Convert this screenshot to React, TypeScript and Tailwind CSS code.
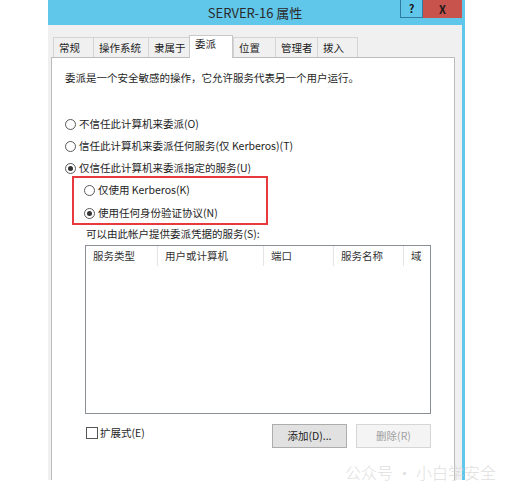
import React from "react";

const font = { fontFamily: '"Noto Sans CJK SC", "Noto Sans", sans-serif' };

const tabs = [
  { label: "常规", w: "w-[40px]" },
  { label: "操作系统", w: "w-[55px]" },
  { label: "隶属于", w: "w-[41px]" },
  { label: "委派", w: "w-[44px]", active: true },
  { label: "位置", w: "w-[42px]" },
  { label: "管理者", w: "w-[42px]" },
  { label: "拨入", w: "w-[41px]" },
];

const columns = [
  { label: "服务类型", w: "w-[72px]" },
  { label: "用户或计算机", w: "w-[106px]" },
  { label: "端口", w: "w-[70px]" },
  { label: "服务名称", w: "w-[70px]" },
  { label: "域", w: "flex-1" },
];

function Radio({ checked, label }: { checked?: boolean; label: string }) {
  return (
    <div className="flex items-center h-[16px]">
      <span className="w-[11px] h-[11px] rounded-full border border-[#5a5a5a] bg-white flex items-center justify-center">
        {checked && <span className="w-[5px] h-[5px] rounded-full bg-[#333]" />}
      </span>
      <span className="ml-[3px] text-[10.5px] leading-[14px] text-[#1e1e1e]">{label}</span>
    </div>
  );
}

export default function App() {
  return (
    <div className="relative w-[517px] h-[492px] bg-white overflow-hidden" style={font}>
      <div className="ml-[48px] w-[417px] h-[480px] flex flex-col">
        {/* title bar */}
        <div className="h-[25px] bg-[#61c7ea] flex items-start pr-[3px]">
          <div className="w-[62px]" />
          <div className="flex-1 text-center text-[13px] leading-[25px] text-[#2a2a2a]">SERVER-16 属性</div>
          <div className="flex">
            <div className="w-[23px] h-[18px] border border-t-0 border-[#2f7aa0] bg-[#61c7ea] flex items-center justify-center text-[11px] font-bold text-[#1a1a1a]">
              ?
            </div>
            <div className="w-[39px] h-[18px] bg-[#c8524c] flex items-center justify-center text-[11px] font-bold text-[#1a1a1a]">
              X
            </div>
          </div>
        </div>

        {/* body */}
        <div className="flex-1 flex flex-col bg-[#f0f0f0] border-r-[3px] border-[#61c7ea] pl-[3px] pr-[7px] pt-[10px]">
          <div className="flex items-end pl-[2px] h-[22px] relative z-10">
            {tabs.map((t) =>
              t.active ? (
                <div
                  key={t.label}
                  className={`${t.w} h-[23px] -mb-px bg-white border border-b-0 border-[#c8c8c8] pl-[5px] pt-[1px] text-[10.5px] leading-[14px] text-[#1e1e1e]`}
                >
                  {t.label}
                </div>
              ) : (
                <div
                  key={t.label}
                  className={`${t.w} h-[20px] bg-[#f0f0f0] border border-b-0 border-r-0 last:border-r border-[#d4d4d4] pl-[5px] pt-[3px] text-[10.5px] leading-[14px] text-[#1e1e1e]`}
                >
                  {t.label}
                </div>
              )
            )}
          </div>

          <div className="flex-1 bg-white border border-b-0 border-[#bcbcbc] pl-[13px] pt-[13px] flex flex-col">
            <p className="text-[10.5px] leading-[14px] text-[#1e1e1e]">
              委派是一个安全敏感的操作，它允许服务代表另一个用户运行。
            </p>

            <div className="mt-[31px] flex flex-col gap-[6px]">
              <Radio label="不信任此计算机来委派(O)" />
              <Radio label="信任此计算机来委派任何服务(仅 Kerberos)(T)" />
              <Radio checked label="仅信任此计算机来委派指定的服务(U)" />
            </div>

            <div className="ml-[7px] w-[196px] h-[49px] border-2 border-[#e8393c] pl-[10px] pt-[4px] flex flex-col gap-[7px]">
              <Radio label="仅使用 Kerberos(K)" />
              <Radio checked label="使用任何身份验证协议(N)" />
            </div>

            <div className="ml-[21px] mt-[2px] text-[10.5px] leading-[14px] text-[#1e1e1e]">
              可以由此帐户提供委派凭据的服务(S):
            </div>

            <div className="ml-[20px] mt-[4px] w-[346px] h-[169px] border border-[#8a8f97] bg-white">
              <div className="flex h-[20px]">
                {columns.map((c) => (
                  <div
                    key={c.label}
                    className={`${c.w} h-full border-r border-[#e5e5e5] last:border-r-0 pl-[7px] text-[10.5px] leading-[20px] text-[#333]`}
                  >
                    {c.label}
                  </div>
                ))}
              </div>
            </div>

            <div className="ml-[21px] mt-[10px] w-[345px] flex items-start">
              <label className="flex items-center mt-[2px]">
                <span className="w-[12px] h-[12px] border border-[#555] bg-white" />
                <span className="ml-[2px] text-[10.5px] leading-[14px] text-[#1e1e1e]">扩展式(E)</span>
              </label>
              <div className="ml-auto flex gap-[9px]">
                <button className="w-[75px] h-[24px] bg-[#e1e1e1] border border-[#adadad] text-[10.5px] text-[#1e1e1e]">
                  添加(D)...
                </button>
                <button className="w-[75px] h-[24px] bg-[#f4f4f4] border border-[#d6d6d6] text-[10.5px] text-[#a0a0a0]">
                  删除(R)
                </button>
              </div>
            </div>
          </div>
        </div>
      </div>

      {/* watermark */}
      <div className="absolute left-[345px] top-[462px] text-[16px] leading-[20px] font-light text-[#d6d6d6]/80">
        公众号 · 小白学安全
      </div>
    </div>
  );
}
